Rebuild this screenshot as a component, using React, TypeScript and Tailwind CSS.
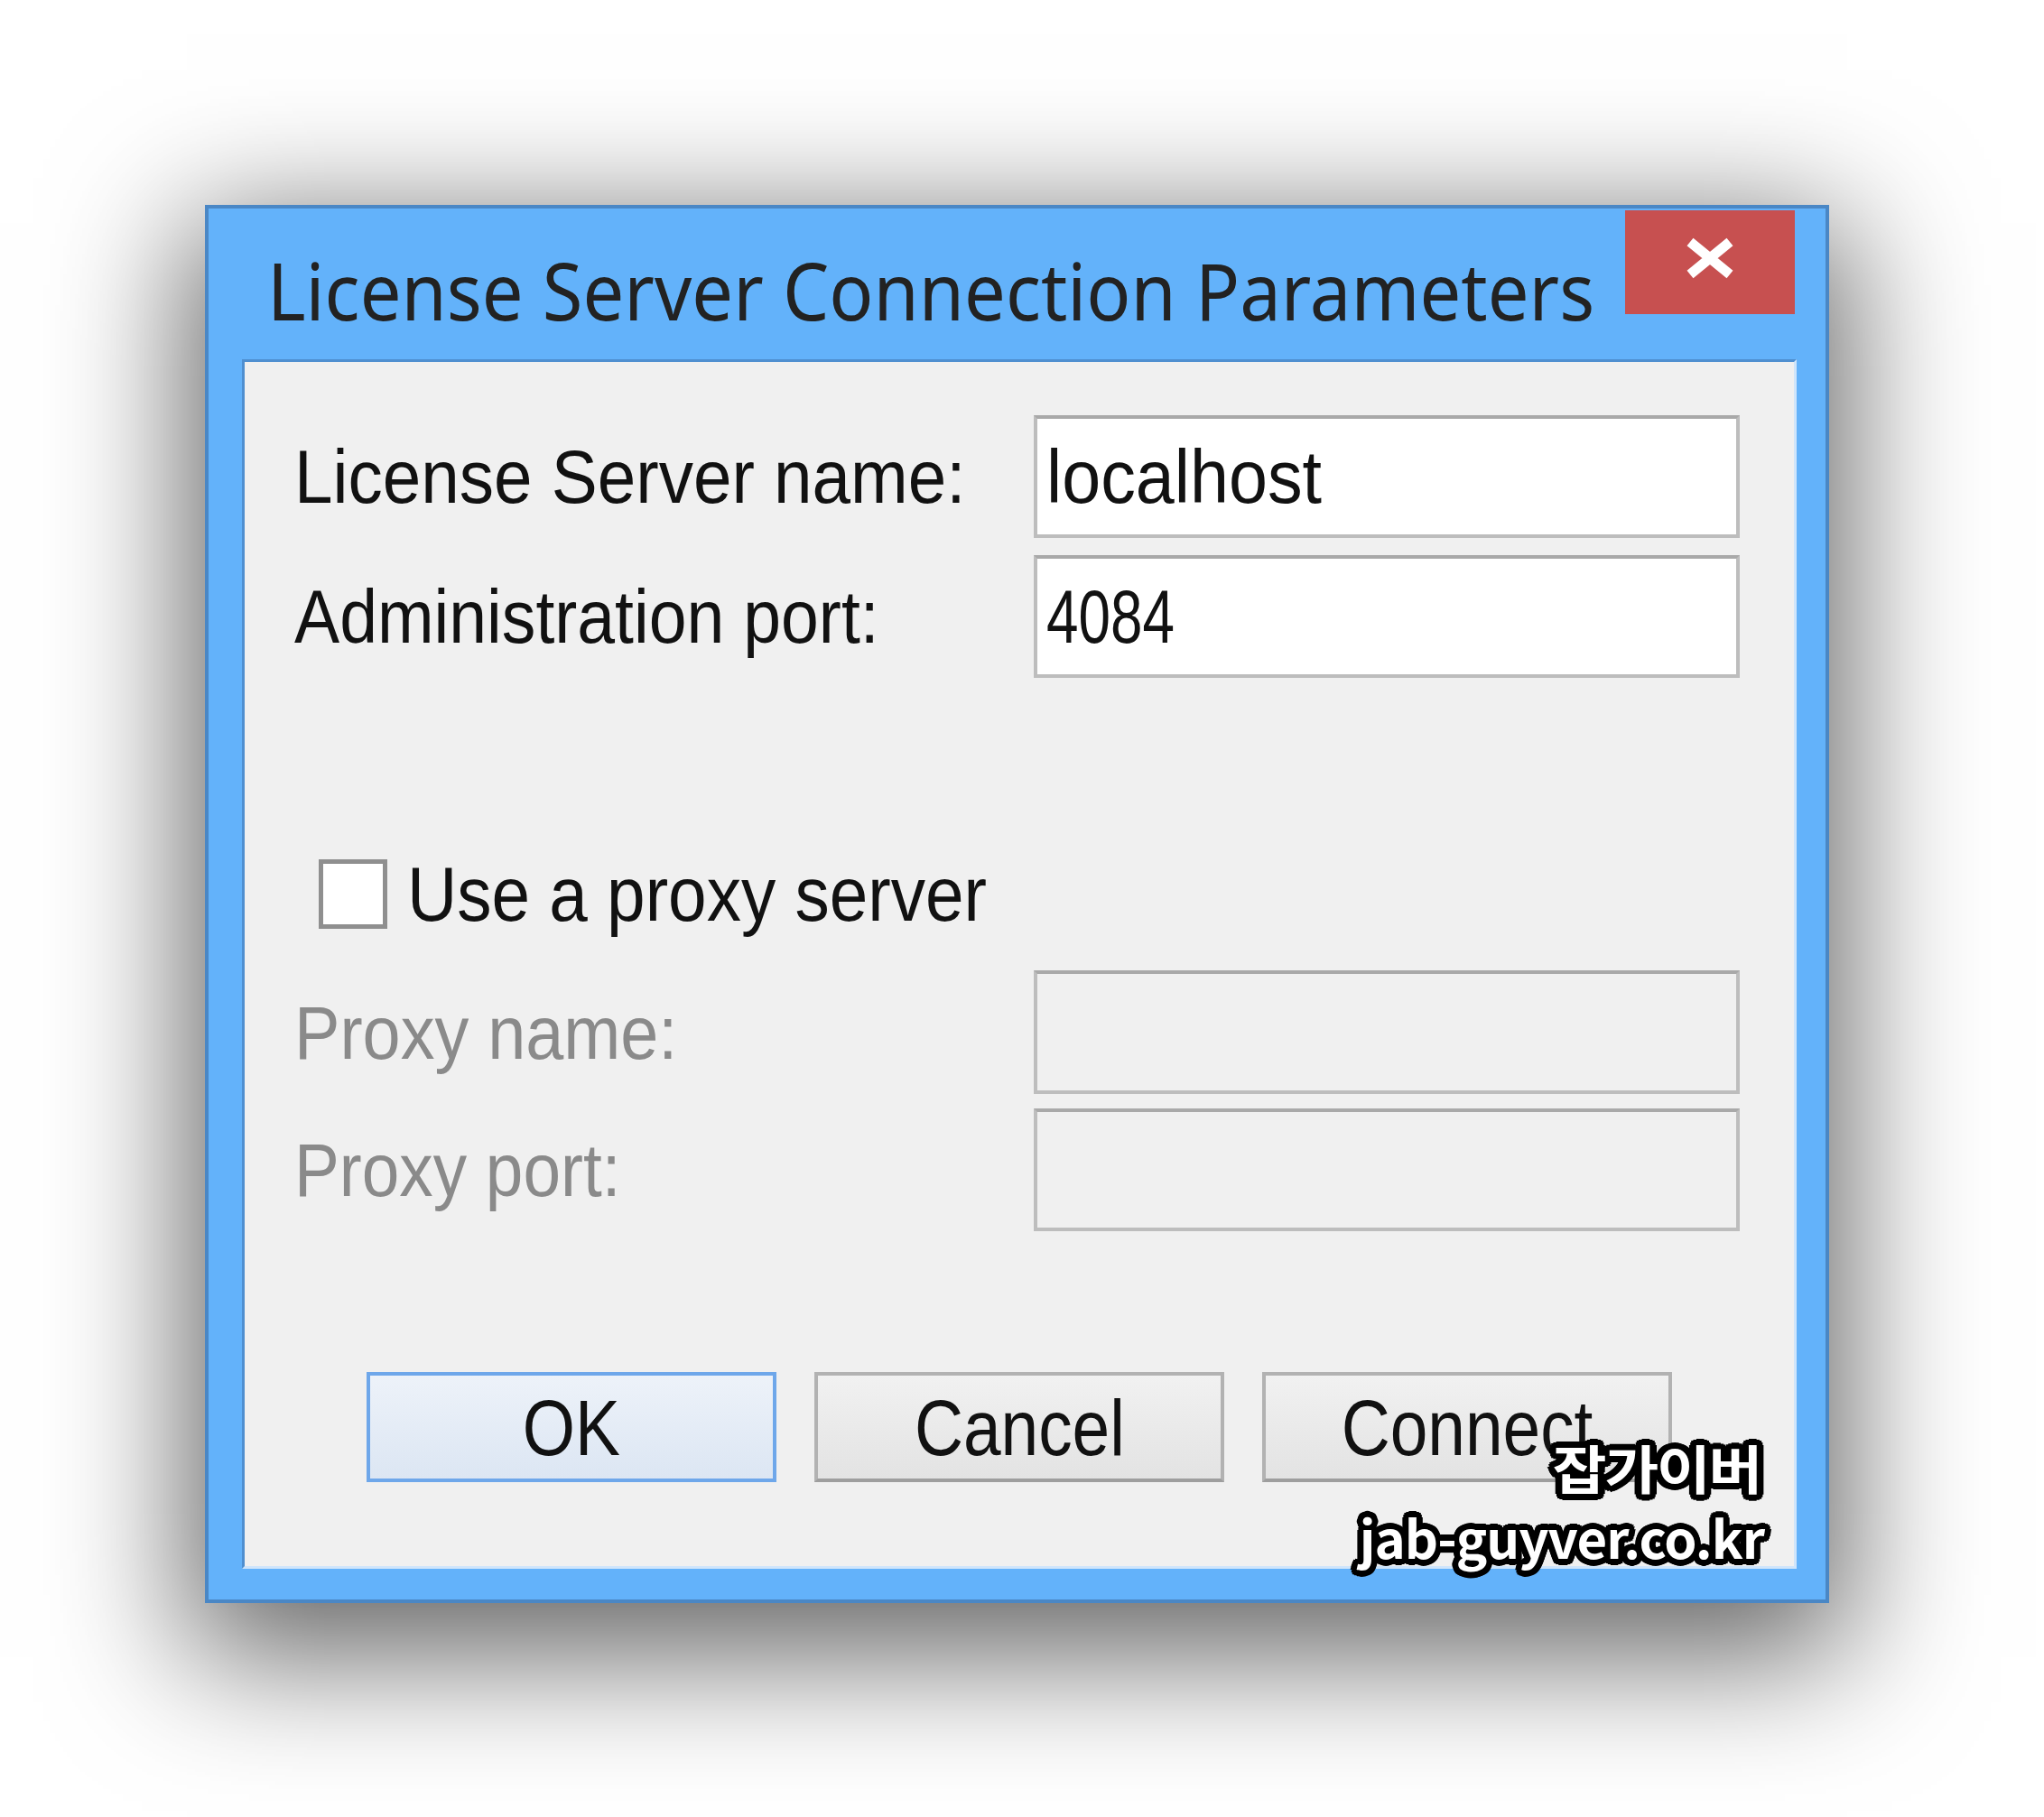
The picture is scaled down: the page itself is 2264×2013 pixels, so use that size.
import React from 'react';

const outline =
  '[text-shadow:7px_0_0_#000,-7px_0_0_#000,0_7px_0_#000,0_-7px_0_#000,5px_5px_0_#000,-5px_5px_0_#000,5px_-5px_0_#000,-5px_-5px_0_#000,6px_3px_0_#000,6px_-3px_0_#000,-6px_3px_0_#000,-6px_-3px_0_#000,3px_6px_0_#000,-3px_6px_0_#000,3px_-6px_0_#000,-3px_-6px_0_#000,3px_0_0_#000,-3px_0_0_#000,0_3px_0_#000,0_-3px_0_#000]';

function TextBox({ children, disabled }: { children?: React.ReactNode; disabled?: boolean }) {
  return (
    <div
      className={
        disabled
          ? 'w-[782px] h-full flex items-center pl-[10px] border-[4px] border-[#bdbdbd] border-t-[#a9a9a9] bg-[#f0f0f0]'
          : 'w-[782px] h-full flex items-center pl-[10px] border-[4px] border-[#bdbdbd] border-t-[#a9a9a9] bg-white'
      }
    >
      {children}
    </div>
  );
}

function DialogButton({ label, primary }: { label: string; primary?: boolean }) {
  return (
    <div
      className={
        primary
          ? 'w-[454px] h-full flex items-center justify-center border-[4px] border-[#6ea7ea] bg-gradient-to-b from-[#edf2f9] to-[#dce6f3]'
          : 'w-[454px] h-full flex items-center justify-center border-[4px] border-[#b2b2b2] border-b-[#9e9e9e] bg-gradient-to-b from-[#f1f1f1] to-[#e3e3e3]'
      }
    >
      <span className="inline-block scale-x-[0.86] text-[87px] leading-none text-[#111]">{label}</span>
    </div>
  );
}

export default function App() {
  return (
    <div className="w-[2264px] h-[2013px] bg-white pt-[227px] pl-[227px] relative overflow-hidden font-['Liberation_Sans',Arial,sans-serif]">
      <div className="w-[1799px] h-[1549px] flex flex-col bg-[#63b2fa] border-[4px] border-[#4a87c5] shadow-[0_40px_140px_20px_rgba(0,0,0,0.6)]">
        {/* title bar */}
        <div className="h-[167px] flex items-start">
          <div className="flex-1 min-w-0 pl-[65px] pt-[47px] whitespace-nowrap">
            <span className="inline-block origin-left scale-x-[0.935] text-[87px] leading-none text-[#222] font-['Noto_Sans',sans-serif]">
              License Server Connection Parameters
            </span>
          </div>
          <div className="shrink-0 mt-[2px] mr-[34px] w-[188px] h-[115px] bg-[#c75050] flex items-center justify-center pb-[10px]">
            <svg width="56" height="46" viewBox="0 0 56 46">
              <path d="M6 5 L50 41 M50 5 L6 41" stroke="#fff" strokeWidth="11" fill="none" />
            </svg>
          </div>
        </div>

        {/* client area */}
        <div className="flex-1 ml-[37px] mr-[32px] mb-[34px] bg-[#f0f0f0] border-[3px] border-t-[#4f8fd0] border-l-[#4f8fd0] border-b-[#cfe5fb] border-r-[#cfe5fb] pl-[55px] pr-[60px] pt-[59px] text-[84px] leading-none text-[#111]">
          <div className="flex items-center h-[136px]">
            <div className="w-[819px] whitespace-nowrap">
              <span className="inline-block origin-left scale-x-[0.91]">License Server name:</span>
            </div>
            <TextBox>
              <span className="inline-block origin-left scale-x-[0.92]">localhost</span>
            </TextBox>
          </div>
          <div className="flex items-center h-[136px] mt-[19px]">
            <div className="w-[819px] whitespace-nowrap">
              <span className="inline-block origin-left scale-x-[0.895]">Administration port:</span>
            </div>
            <TextBox>
              <span className="inline-block origin-left scale-x-[0.76]">4084</span>
            </TextBox>
          </div>

          <div className="flex items-center h-[77px] mt-[201px] ml-[27px] gap-[22px]">
            <div className="w-[76px] h-[77px] bg-white border-[5px] border-[#8f8f8f]" />
            <span className="inline-block origin-left scale-x-[0.9] text-[85px] whitespace-nowrap">Use a proxy server</span>
          </div>

          <div className="flex items-center h-[137px] mt-[46px] text-[#8a8a8a]">
            <div className="w-[819px] whitespace-nowrap">
              <span className="inline-block origin-left scale-x-[0.9]">Proxy name:</span>
            </div>
            <TextBox disabled />
          </div>
          <div className="flex items-center h-[136px] mt-[16px] text-[#8a8a8a]">
            <div className="w-[819px] whitespace-nowrap">
              <span className="inline-block origin-left scale-x-[0.89]">Proxy port:</span>
            </div>
            <TextBox disabled />
          </div>

          <div className="flex h-[122px] mt-[156px] ml-[80px] gap-[42px]">
            <DialogButton label="OK" primary />
            <DialogButton label="Cancel" />
            <DialogButton label="Connect" />
          </div>
        </div>
      </div>

      {/* watermark */}
      <div className="absolute left-[1440px] top-[1596px] w-[514px] flex flex-col items-end whitespace-nowrap font-['Noto_Sans_CJK_KR',sans-serif] font-bold text-white leading-none">
        <span className={'inline-block origin-right scale-x-[1.12] pr-[4px] text-[58px] tracking-[-2px] ' + outline}>잡가이버</span>
        <span className={'inline-block text-[58px] tracking-[-1px] mt-[19px] ' + outline}>jab-guyver.co.kr</span>
      </div>
    </div>
  );
}
